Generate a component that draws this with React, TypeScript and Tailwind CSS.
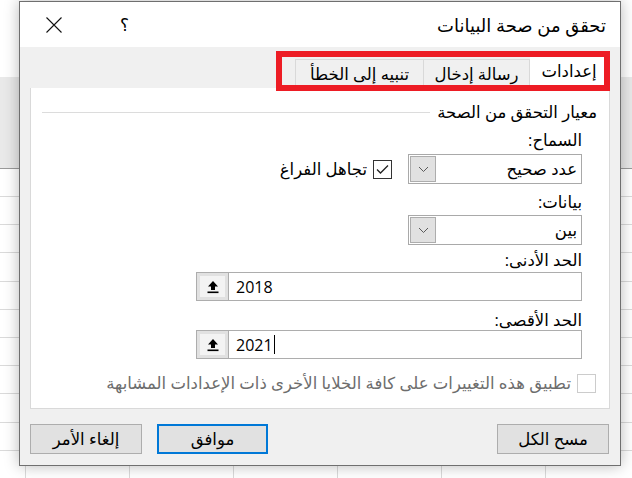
import React from "react";

function Chevron() {
  return (
    <svg width="11" height="7" viewBox="0 0 11 7" className="block">
      <path d="M1 1 L5.5 5.5 L10 1" fill="none" stroke="#5a5a5a" strokeWidth="1" />
    </svg>
  );
}

function UpArrow() {
  return (
    <svg width="12" height="14" viewBox="0 0 12 14" className="block">
      <polygon points="6,1 11,6.5 8,6.5 8,10 4,10 4,6.5 1,6.5" fill="#000" />
      <rect x="0.5" y="11.5" width="11" height="1.6" fill="#000" />
    </svg>
  );
}

function Combo({ text }: { text: string }) {
  return (
    <div className="w-[174px] h-[30px] border border-[#a9a9a9] bg-white flex flex-row items-center justify-between">
      <span className="pr-[4px] text-[16.5px] leading-none text-black">{text}</span>
      <div className="ml-px w-[26px] h-[26px] bg-[#e1e1e1] border border-[#adadad] flex items-center justify-center">
        <Chevron />
      </div>
    </div>
  );
}

function RefInput({ value, caret }: { value: string; caret?: boolean }) {
  return (
    <div className="w-[386px] h-[29px] border border-[#adadad] bg-white flex flex-row items-center" dir="ltr">
      <div className="h-full w-[32px] bg-[#e1e1e1] border-r border-[#adadad] flex items-center justify-center">
        <div className="w-[25px] h-[21px] bg-[#f3f3f3] flex items-center justify-center">
          <UpArrow />
        </div>
      </div>
      <div className="pl-[7px] flex items-center font-['Open_Sans',sans-serif] text-[16px] leading-none text-black">
        {value}
        {caret && <span className="ml-px w-px h-[19px] bg-black inline-block" />}
      </div>
    </div>
  );
}

function SheetRow({ h }: { h: string }) {
  return (
    <div className={`${h} border-b border-[#dadada] flex flex-row`}>
      <div className="w-[26px] border-r border-[#dadada]" />
      <div className="w-[104px] border-r border-[#dadada]" />
      <div className="w-[104px] border-r border-[#dadada]" />
      <div className="w-[104px] border-r border-[#dadada]" />
      <div className="w-[104px] border-r border-[#dadada]" />
      <div className="w-[104px] border-r border-[#dadada]" />
      <div className="flex-1" />
    </div>
  );
}

export default function App() {
  return (
    <div className="relative w-[632px] h-[478px] overflow-hidden bg-white font-['Open_Sans','DejaVu_Sans',sans-serif]">
      {/* spreadsheet background */}
      <div className="flex flex-col w-full">
        <div className="h-[77px] bg-white" />
        <div className="h-[92px] bg-[#e9e9e9] border-b border-[#9a9a9a]" />
        <div className="h-[28px] border-b border-[#dadada]" />
        <SheetRow h="h-[28px]" />
        <SheetRow h="h-[28px]" />
        <SheetRow h="h-[29px]" />
        <SheetRow h="h-[28px]" />
        <SheetRow h="h-[28px]" />
        <SheetRow h="h-[28px]" />
        <SheetRow h="h-[28px]" />
        <SheetRow h="h-[29px]" />
        <SheetRow h="h-[28px]" />
        <SheetRow h="h-[28px]" />
      </div>

      {/* dialog window */}
      <div
        dir="rtl"
        className="absolute left-[19px] top-[1px] w-[602px] h-[465px] border border-[#6f6f6f] bg-[#f0f0f0] shadow-[0_0_14px_rgba(0,0,0,0.28)] flex flex-col"
      >
        {/* title bar */}
        <div className="h-[45px] bg-white flex flex-row items-center justify-between pr-[14px]">
          <span className="text-[18px] leading-none text-black">تحقق من صحة البيانات</span>
          <div className="flex flex-row items-center h-full">
            <span className="text-[17px] leading-none text-black ml-[58px]">؟</span>
            <svg width="16" height="16" viewBox="0 0 16 16" className="block ml-[26px]">
              <path d="M0.5 0.5 L15.5 15.5 M15.5 0.5 L0.5 15.5" stroke="#111" strokeWidth="1.1" fill="none" />
            </svg>
          </div>
        </div>

        {/* body */}
        <div className="flex-1 flex flex-col px-[10px]">
          {/* tabs */}
          <div className="h-[41px] flex flex-row items-end pr-[2px]">
            <div className="h-[33px] w-[78px] bg-white flex items-center justify-center text-[16.5px] leading-none text-black">إعدادات</div>
            <div className="h-[29px] w-[107px] bg-[#f0f0f0] border border-b-0 border-[#d9d9d9] flex items-center justify-center text-[16.5px] leading-none text-black">رسالة إدخال</div>
            <div className="h-[29px] w-[128px] bg-[#f0f0f0] border border-b-0 border-r-0 border-[#d9d9d9] flex items-center justify-center text-[16.5px] leading-none text-black">تنبيه إلى الخطأ</div>
          </div>

          {/* panel */}
          <div className="h-[321px] bg-white border border-t-0 border-[#d9d9d9] flex flex-col">
            <div className="mt-[13px] h-[22px] flex flex-row items-center pr-[12px] pl-[11px]">
              <span className="text-[16.5px] leading-none text-black whitespace-nowrap">معيار التحقق من الصحة</span>
              <div className="flex-1 mr-[7px] h-px bg-[#dcdcdc]" />
            </div>

            <div className="flex flex-col pr-[27px]">
              <div className="mt-[8px] h-[18px] flex items-center text-[16.5px] leading-none text-black">السماح:</div>
              <div className="mt-[5px] flex flex-row items-center">
                <Combo text="عدد صحيح" />
                <div className="mr-[16px] flex flex-row items-center">
                  <div className="w-[19px] h-[19px] border border-[#333] bg-white flex items-center justify-center">
                    <svg width="13" height="11" viewBox="0 0 13 11" className="block">
                      <path d="M1 5.5 L4.5 9 L12 1.5" fill="none" stroke="#222" strokeWidth="1.3" />
                    </svg>
                  </div>
                  <span className="mr-[6px] text-[16.5px] leading-none text-black">تجاهل الفراغ</span>
                </div>
              </div>

              <div className="mt-[9px] h-[18px] flex items-center text-[16.5px] leading-none text-black">بيانات:</div>
              <div className="mt-[4px]">
                <Combo text="بين" />
              </div>

              <div className="mt-[6px] h-[18px] flex items-center text-[16.5px] leading-none text-black">الحد الأدنى:</div>
              <div className="mt-[3px]">
                <RefInput value="2018" />
              </div>

              <div className="mt-[10px] h-[18px] flex items-center text-[16.5px] leading-none text-black">الحد الأقصى:</div>
              <div className="mt-[1px]">
                <RefInput value="2021" caret />
              </div>
            </div>

            <div className="mt-[15px] pr-[13px] flex flex-row items-center">
              <div className="w-[19px] h-[19px] border border-[#cccccc] bg-white" />
              <span className="mr-[6px] text-[16.5px] leading-none text-[#6d6d6d] whitespace-nowrap">
                تطبيق هذه التغييرات على كافة الخلايا الأخرى ذات الإعدادات المشابهة
              </span>
            </div>
          </div>

          {/* buttons */}
          <div className="mt-[15px] h-[30px] flex flex-row items-center justify-between pl-[0px] pr-[1px]">
            <div className="w-[112px] h-[30px] bg-[#e1e1e1] border border-[#adadad] flex items-center justify-center text-[16.5px] leading-none text-black">مسح الكل</div>
            <div className="flex flex-row items-center">
              <div className="w-[111px] h-[30px] bg-[#e1e1e1] border-2 border-[#0078d7] flex items-center justify-center text-[16.5px] leading-none text-black">موافق</div>
              <div className="mr-[15px] w-[112px] h-[30px] bg-[#e1e1e1] border border-[#adadad] flex items-center justify-center text-[16.5px] leading-none text-black">إلغاء الأمر</div>
            </div>
          </div>
        </div>
      </div>

      {/* red highlight box drawn over the tabs */}
      <div className="absolute left-[276px] top-[51px] w-[334px] h-[40px] border-[6px] border-[#ed1c24]" />
    </div>
  );
}
